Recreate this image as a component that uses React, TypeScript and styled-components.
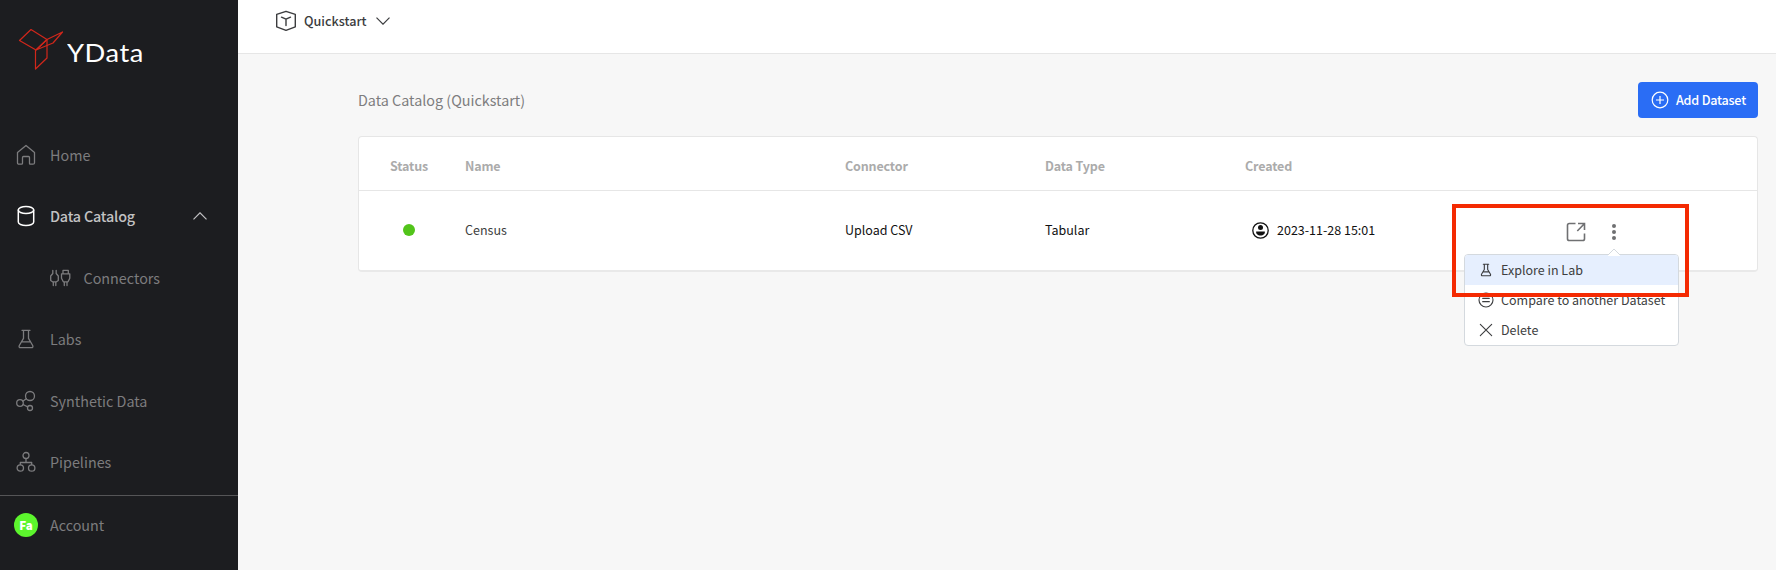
import React from 'react';
import styled, { createGlobalStyle, css } from 'styled-components';

const GlobalStyle = createGlobalStyle`
  *, *::before, *::after { box-sizing: border-box; }
  body {
    margin: 0;
    background: #f7f7f7;
    font-family: "Noto Sans CJK SC", "Noto Sans", sans-serif;
    overflow: hidden;
  }
`;

const Shell = styled.div`
  display: flex;
  width: 1776px;
  height: 570px;
  background: #f7f7f7;
`;

const Sidebar = styled.aside`
  display: flex;
  flex-direction: column;
  flex: 0 0 238px;
  background: #1c1d20;
`;

const Brand = styled.div`
  display: flex;
  height: 124px;
  padding: 28px 0 0 18px;
`;

const BrandName = styled.span`
  margin: 6px 0 0 3px;
  color: #fff;
  font: 400 25.5px/36px Lato, sans-serif;
  letter-spacing: 0.5px;
  transform: scaleX(1.07);
  transform-origin: left;
`;

const Nav = styled.nav`
  display: flex;
  flex-direction: column;
  height: 371px;
`;

const NavItem = styled.a<{ $active?: boolean; $nested?: boolean }>`
  display: flex;
  align-items: center;
  height: 61.5px;
  padding: 0 31px 0 ${(p) => (p.$nested ? 48 : 14)}px;
  color: ${(p) => (p.$active ? '#c2c2c3' : '#7c7c7e')};
  font-size: 14.35px;
  font-weight: ${(p) => (p.$active ? 500 : 400)};
  line-height: 20px;
  letter-spacing: ${(p) => (p.$active ? -0.18 : 0)}px;

  > svg:first-child {
    color: ${(p) => (p.$active ? '#fff' : 'inherit')};
  }
`;

const NavLabel = styled.span<{ $nested?: boolean }>`
  flex: 1;
  margin-left: ${(p) => (p.$nested ? 11.5 : 12)}px;
`;

const AccountBar = styled.div`
  display: flex;
  align-items: center;
  height: 60px;
  padding: 0 0 1px 14px;
  border-top: 1px solid #555557;
  color: #7c7c7e;
  font-size: 14.35px;
  line-height: 20px;
`;

const Avatar = styled.span`
  display: flex;
  align-items: center;
  justify-content: center;
  width: 24px;
  height: 24px;
  border-radius: 50%;
  background: #5cf52d;
  color: #fff;
  font-size: 11.5px;
  font-weight: 900;
`;

const Main = styled.main`
  display: flex;
  flex-direction: column;
  flex: 1;
`;

const TopBar = styled.header`
  display: flex;
  align-items: center;
  gap: 6px;
  height: 54px;
  padding: 0 0 11px 36px;
  border-bottom: 1px solid #e6e6e6;
  background: #fff;
  color: #3b3c3e;
`;

const ProjectName = styled.span`
  margin-right: 3px;
  font-size: 12.6px;
  font-weight: 500;
  line-height: 18px;
`;

const Content = styled.section`
  display: flex;
  flex-direction: column;
  padding: 28px 18px 0 120px;
`;

const TitleRow = styled.div`
  display: flex;
  align-items: center;
  justify-content: space-between;
  margin-bottom: 18px;
`;

const Title = styled.h1`
  margin: 0;
  color: #7d7d7e;
  font-size: 14.35px;
  font-weight: 400;
  line-height: 20px;
`;

const AddButton = styled.button`
  display: flex;
  align-items: center;
  gap: 7px;
  width: 120px;
  height: 36px;
  padding: 0 0 0 13px;
  border: 0;
  border-radius: 4px;
  background: #2a6df5;
  color: #fff;
  font: 500 12.6px/18px "Noto Sans CJK SC", sans-serif;
  letter-spacing: -0.22px;
  white-space: nowrap;
`;

const Table = styled.div`
  border: 1px solid #e6e6e6;
  border-bottom: 2px solid #e9e9e9;
  border-radius: 4px;
  background: #fff;
`;

const rowGrid = css`
  display: grid;
  grid-template-columns: 106px 380px 200px 200px 1fr;
  align-items: center;
`;

const HeadRow = styled.div`
  ${rowGrid}
  height: 54px;
  padding-top: 5px;
  border-bottom: 1px solid #e6e6e6;
  color: #ababab;
  font-size: 12.5px;
  font-weight: 700;
  line-height: 18px;
  letter-spacing: -0.15px;
`;

const BodyRow = styled.div`
  ${rowGrid}
  height: 79px;
  padding-bottom: 1px;
  color: #111;
  font-size: 12.5px;
  line-height: 18px;
`;

const Cell = styled.div<{ $indent?: number; $muted?: boolean }>`
  padding-left: ${(p) => p.$indent ?? 0}px;
  color: ${(p) => (p.$muted ? '#3d3e40' : 'inherit')};
`;

const StatusDot = styled.span`
  display: block;
  width: 12px;
  height: 12px;
  border-radius: 50%;
  background: #52c41a;
`;

const CreatedCell = styled.div`
  position: relative;
  display: flex;
  align-items: center;
  height: 22px;
  padding-left: 7px;
`;

const Timestamp = styled.span`
  width: 297px;
  padding-left: 8px;
`;

const Actions = styled.div`
  display: flex;
  gap: 26px;
  margin-top: 4px;
  color: #6f7072;
`;

const Menu = styled.div`
  position: absolute;
  top: 35px;
  left: 219px;
  z-index: 1;
  width: 215px;
  border: 1px solid #d4d9de;
  border-radius: 4px;
  background: #fff;
  color: #3d3e40;
`;

const MenuCaret = styled.svg`
  position: absolute;
  top: -7px;
  left: 142px;
`;

const MenuItem = styled.div<{ $selected?: boolean }>`
  display: flex;
  align-items: center;
  gap: 7px;
  height: 30px;
  padding-left: 13px;
  border-radius: ${(p) => (p.$selected ? '3px 3px 0 0' : '3px')};
  background: ${(p) => (p.$selected ? '#e6effe' : 'transparent')};
  white-space: nowrap;
`;

const Highlight = styled.div`
  position: absolute;
  top: -15px;
  left: 207px;
  z-index: 2;
  width: 237px;
  height: 93px;
  border: 4px solid #f42a02;
`;

type IconProps = { size?: number; stroke?: number; children: React.ReactNode };

const Icon = ({ size = 24, stroke = 1.3, children }: IconProps) => (
  <svg
    width={size}
    height={size}
    viewBox="0 0 24 24"
    fill="none"
    stroke="currentColor"
    strokeWidth={stroke}
    strokeLinecap="round"
    strokeLinejoin="round"
  >
    {children}
  </svg>
);

const Logo = () => (
  <svg width="46" height="42" viewBox="0 0 46 42" fill="none" stroke="#d1271b" strokeWidth="1.2" strokeLinejoin="round">
    <path d="M1.5 12.5 13 1.5l16 10L18 22z" />
    <path d="M18 22 29 11.5 44.5 4 35 15z" />
    <path d="M29 11.5V30L17.5 41V22" />
  </svg>
);

const HomeIcon = () => (
  <Icon>
    <path d="M3.500 9.500 12 2.500l8.500 7v10.200c0 1-.5 1.500-1.500 1.500h-2.500c-.7 0-1-.3-1-1v-5.700c0-.7-.3-1-1-1h-5c-.7 0-1 .3-1 1v5.700c0 .7-.3 1-1 1H5c-1 0-1.500-.5-1.500-1.500z" />
  </Icon>
);

const DatabaseIcon = () => (
  <Icon stroke={1.5}>
    <ellipse cx="12" cy="6" rx="7.700" ry="3.500" />
    <path d="M4.300 6v12c0 1.900 3.400 3.500 7.700 3.500s7.700-1.600 7.700-3.500V6" />
  </Icon>
);

const PlugsIcon = () => (
  <Icon>
    <path d="M4.800 4.300v3.200L2.700 10v4.500l1.800 1.300h4l1.800-1.300V10L8.200 7.500V4.300M5.300 15.900v3.600M7.800 15.900v3.600" />
    <path d="M15 4.300h5.300v3.500H15zM15 7.800h-1.500v4.500l1.800 3.500h4.700l1.800-3.500V7.800h-1.500M16.300 15.900v3.600M19 15.900v3.600" />
  </Icon>
);

const Flask = () => (
  <path d="M8 3.300h8M9.500 3.300v8M14.500 3.300v8M9.500 11.300 5.300 18.500c-.6 1.300 0 2.200 1.300 2.200h10.800c1.300 0 1.900-.9 1.300-2.200l-4.200-7.200M7.500 14.800h9" />
);

const NodesIcon = () => (
  <Icon>
    <circle cx="16" cy="7" r="4.500" />
    <circle cx="6" cy="14" r="3.300" />
    <circle cx="16" cy="19" r="2.500" />
    <path d="m8.800 12.200 3.500-2.500M9 15.500l4.700 2.300" />
  </Icon>
);

const TreeIcon = () => (
  <Icon>
    <circle cx="12" cy="5.500" r="3" />
    <circle cx="6.300" cy="18" r="3.200" />
    <circle cx="17.700" cy="18" r="3.200" />
    <path d="M12 8.700v3.800M6.300 14.600v-2.100h11.400v2.100" />
  </Icon>
);

const CubeIcon = () => (
  <Icon stroke={1.4}>
    <path d="m12 2.300 9.300 3v12.500L12 21.300l-9.300-3.500V5.300zM7.500 8.200l4.500 2 4.500-2M12 10.200v6.300" />
  </Icon>
);

const Chevron = ({ up }: { up?: boolean }) => (
  <svg width="14" height="8" viewBox="0 0 14 8" fill="none" stroke="currentColor" strokeWidth="1.2">
    <path d={up ? 'M.5 7.300 7 .8l6.500 6.500' : 'M.5.700 7 7.200 13.500.700'} />
  </svg>
);

const UserIcon = () => (
  <svg width="17" height="17" viewBox="0 0 17 17" fill="#111">
    <circle cx="8.500" cy="8.500" r="7.700" fill="none" stroke="#111" strokeWidth="1.300" />
    <circle cx="8.500" cy="5.500" r="2.500" />
    <path d="M4.200 9.400h8.600c.5 2-1.400 4-4.300 4s-4.800-2-4.300-4z" />
  </svg>
);

const OpenIcon = () => (
  <svg width="20" height="20" viewBox="0 0 20 20" fill="none" stroke="currentColor" strokeWidth="1.600">
    <path d="M9.500 1.500H3.300c-1.200 0-1.800.6-1.800 1.800v13.400c0 1.200.6 1.800 1.800 1.800h13.400c1.200 0 1.800-.6 1.800-1.800V11.500M12 1.500h6.500V8M18.300 1.700 11.300 9" />
  </svg>
);

const MoreIcon = () => (
  <svg width="4" height="20" viewBox="0 0 4 20" fill="currentColor">
    <circle cx="2" cy="4" r="2" />
    <circle cx="2" cy="10" r="2" />
    <circle cx="2" cy="16" r="2" />
  </svg>
);

export default function App() {
  return (
    <>
      <GlobalStyle />
      <Shell>
        <Sidebar>
          <Brand>
            <Logo />
            <BrandName>YData</BrandName>
          </Brand>
          <Nav>
            <NavItem><HomeIcon /><NavLabel>Home</NavLabel></NavItem>
            <NavItem $active><DatabaseIcon /><NavLabel>Data Catalog</NavLabel><Chevron up /></NavItem>
            <NavItem $nested><PlugsIcon /><NavLabel $nested>Connectors</NavLabel></NavItem>
            <NavItem><Icon><Flask /></Icon><NavLabel>Labs</NavLabel></NavItem>
            <NavItem><NodesIcon /><NavLabel>Synthetic Data</NavLabel></NavItem>
            <NavItem><TreeIcon /><NavLabel>Pipelines</NavLabel></NavItem>
          </Nav>
          <AccountBar>
            <Avatar>Fa</Avatar>
            <NavLabel>Account</NavLabel>
          </AccountBar>
        </Sidebar>
        <Main>
          <TopBar>
            <CubeIcon />
            <ProjectName>Quickstart</ProjectName>
            <Chevron />
          </TopBar>
          <Content>
            <TitleRow>
              <Title>Data Catalog (Quickstart)</Title>
              <AddButton>
                <svg width="18" height="18" viewBox="0 0 18 18" fill="none" stroke="currentColor" strokeWidth="1.2">
                  <circle cx="9" cy="9" r="7.800" />
                  <path d="M9 5v8M5 9h8" />
                </svg>
                Add Dataset
              </AddButton>
            </TitleRow>
            <Table>
              <HeadRow>
                <Cell $indent={31}>Status</Cell>
                <Cell>Name</Cell>
                <Cell>Connector</Cell>
                <Cell>Data Type</Cell>
                <Cell>Created</Cell>
              </HeadRow>
              <BodyRow>
                <Cell $indent={44}><StatusDot /></Cell>
                <Cell $muted>Census</Cell>
                <Cell>Upload CSV</Cell>
                <Cell>Tabular</Cell>
                <CreatedCell>
                  <UserIcon />
                  <Timestamp>2023-11-28 15:01</Timestamp>
                  <Actions>
                    <OpenIcon />
                    <MoreIcon />
                  </Actions>
                  <Menu>
                    <MenuCaret width="14" height="8" viewBox="0 0 14 8">
                      <path d="M1 7 7 1l6 6v1H1z" fill="#fff" />
                      <path d="M1 7 7 1l6 6" fill="none" stroke="#d4d9de" />
                    </MenuCaret>
                    <MenuItem $selected><Icon size={16} stroke={1.7}><Flask /></Icon>Explore in Lab</MenuItem>
                    <MenuItem>
                      <Icon size={16} stroke={1.7}>
                        <circle cx="12" cy="12" r="10.500" />
                        <path d="M7 9.500h10M7 14.500h10" />
                      </Icon>
                      Compare to another Dataset
                    </MenuItem>
                    <MenuItem>
                      <Icon size={16} stroke={1.7}><path d="m3.500 3.500 17 17M20.500 3.500l-17 17" /></Icon>
                      Delete
                    </MenuItem>
                  </Menu>
                  <Highlight />
                </CreatedCell>
              </BodyRow>
            </Table>
          </Content>
        </Main>
      </Shell>
    </>
  );
}
